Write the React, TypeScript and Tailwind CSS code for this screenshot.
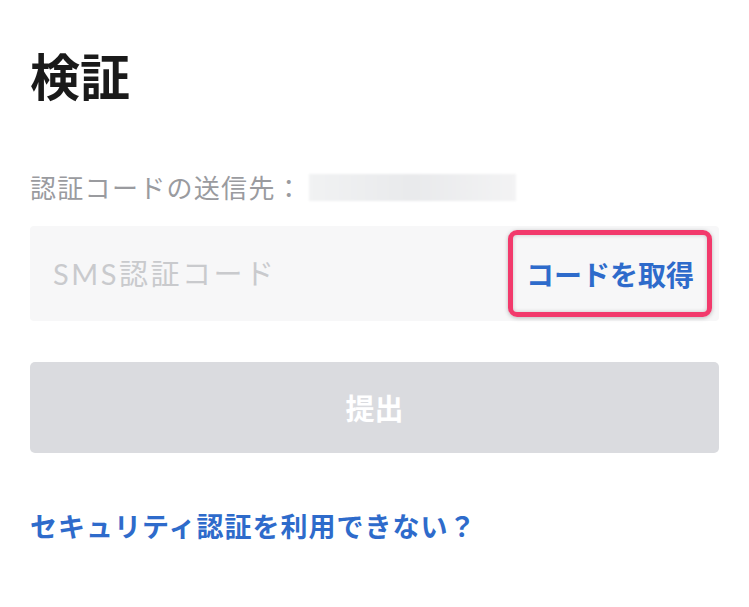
const jp = "font-['Noto_Sans_CJK_JP','Noto_Sans',sans-serif]"

export default function App() {
  return (
    <div className={`min-h-[607px] w-full bg-white px-[30px] pt-[42px] ${jp}`}>
      {/* 見出し */}
      <h1 className="text-[50px] font-bold leading-[64px] text-[#1a1a1a]">検証</h1>

      {/* 送信先 */}
      <div className="mt-[66px] flex h-[30px] items-center">
        <span className="text-[26px] leading-[30px] tracking-[1.3px] text-[#9a9b9f]">認証コードの送信先：</span>
        <div className="ml-[6px] h-[27px] w-[207px] bg-gradient-to-r from-[#f1f2f3] via-[#e9eaec] to-[#f3f3f4] blur-[1px]" />
      </div>

      {/* SMSコード入力 */}
      <div className="mt-[24px] flex h-[95px] items-center rounded-[4px] bg-[#f7f7f8] pl-[23px] pr-[7px]">
        <input
          className="min-w-0 flex-1 bg-transparent font-['Lato','Noto_Sans_CJK_JP',sans-serif] text-[29px] tracking-[2.5px] text-[#333] outline-none placeholder:text-[#c9cacd]"
          placeholder="SMS認証コード"
        />
        <button className="flex h-[87px] w-[204px] items-center justify-center rounded-[9px] border-[5px] border-[#f23a6c] shadow-[0_1px_4px_rgba(0,0,0,0.25),inset_0_0_4px_rgba(0,0,0,0.2)]">
          <span className="text-[28px] font-bold text-[#2e6bcb]">コードを取得</span>
        </button>
      </div>

      {/* 提出ボタン */}
      <button className="mt-[41px] flex h-[91px] w-full items-center justify-center rounded-[5px] bg-[#dadbdf]">
        <span className="text-[29px] font-bold text-white">提出</span>
      </button>

      {/* リンク */}
      <a className="mt-[55px] block text-[27px] font-bold leading-[36px] tracking-[1px] text-[#2e6bcb]">
        セキュリティ認証を利用できない？
      </a>
    </div>
  )
}
